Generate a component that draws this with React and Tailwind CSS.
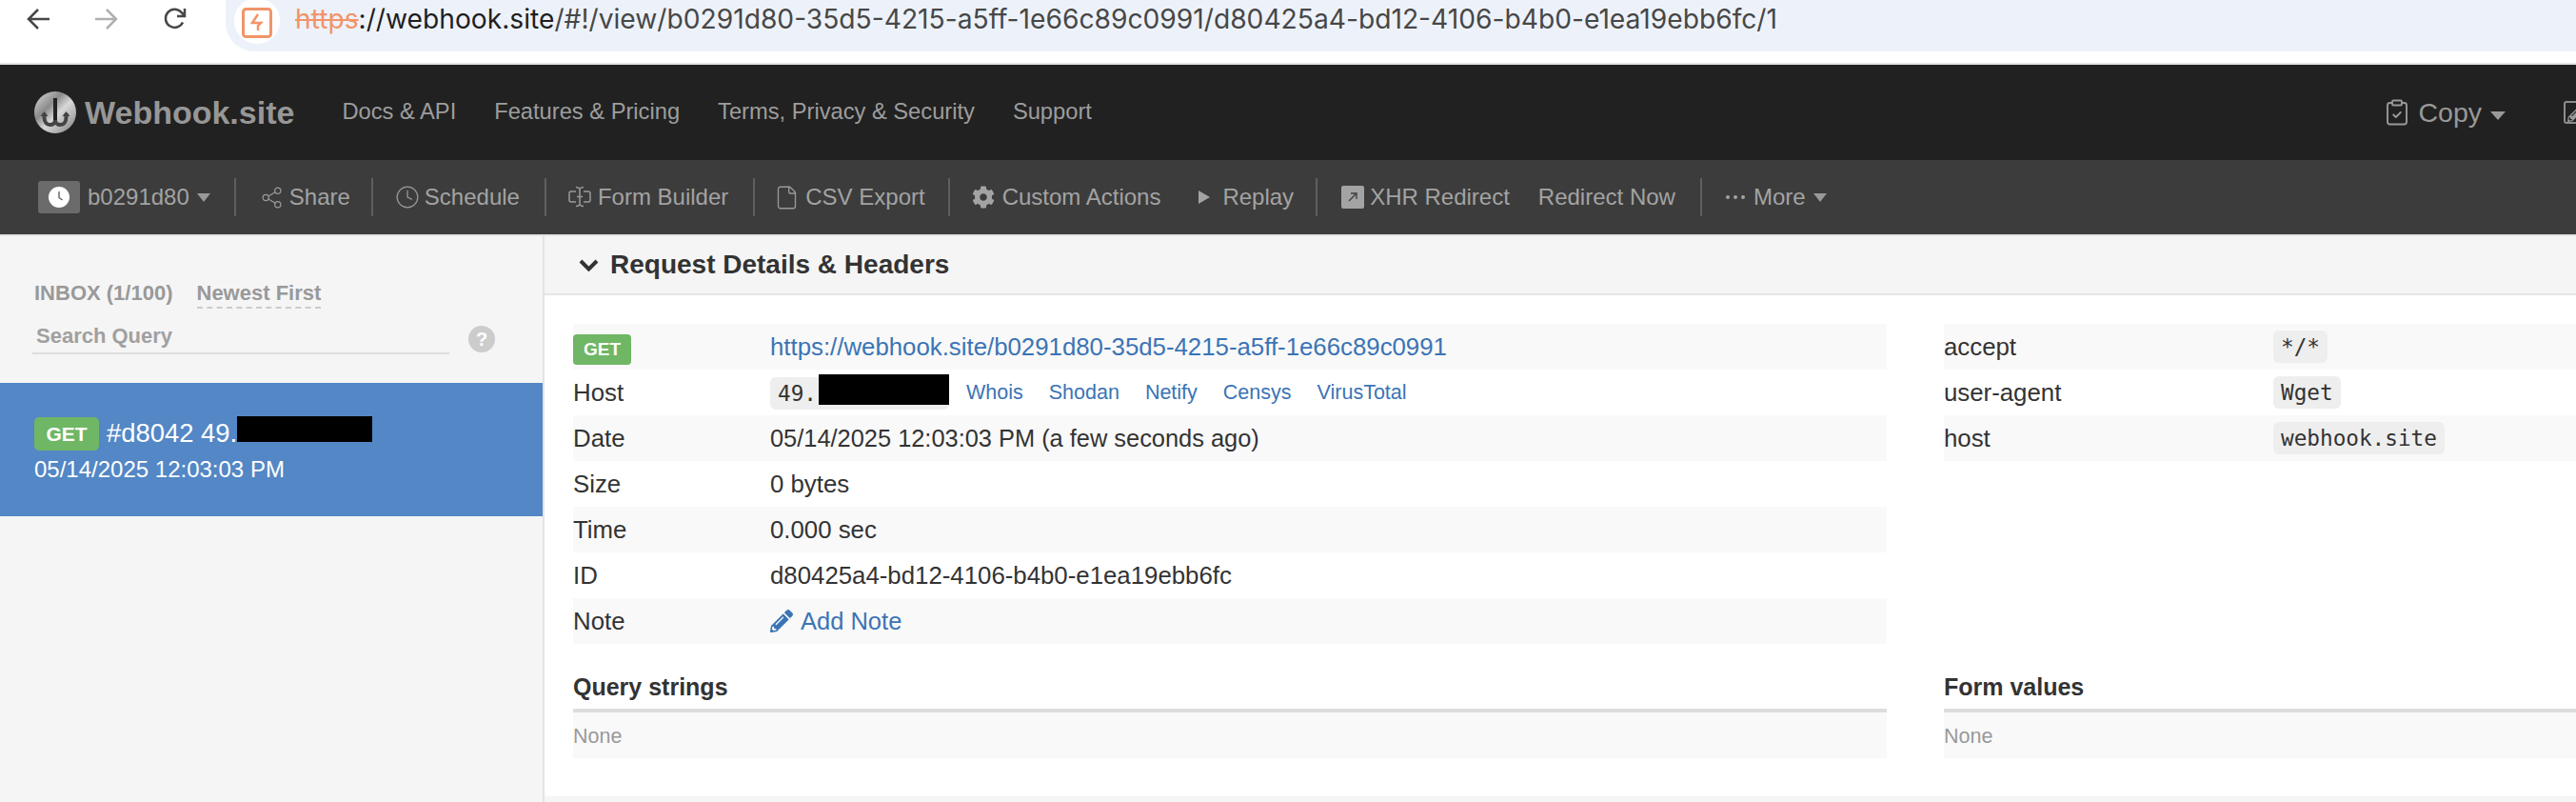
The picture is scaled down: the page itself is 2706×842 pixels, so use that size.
import React from 'react';
import { Share2, Clock, File, ClipboardCheck } from 'lucide-react';
import { FaCog, FaPencilAlt } from 'react-icons/fa';

const sans = "font-['Liberation_Sans',Arial,sans-serif]";

function Caret({ className = 'border-t-[9px] border-x-[7px]' }) {
  return <span className={`inline-block w-0 h-0 border-solid border-x-transparent border-t-[#999] border-b-0 ${className}`} />;
}

function Divider() {
  return <span className="w-[2px] h-10 bg-[#5f5f5f] shrink-0" />;
}

function Logo() {
  return (
    <svg width="44" height="44" viewBox="0 0 44 44">
      <defs>
        <linearGradient id="metal" x1="0" y1="0" x2="1" y2="1">
          <stop offset="0" stopColor="#e0e0e0" />
          <stop offset="0.35" stopColor="#8a8a8a" />
          <stop offset="0.55" stopColor="#d8d8d8" />
          <stop offset="0.75" stopColor="#b0b0b0" />
          <stop offset="1" stopColor="#777" />
        </linearGradient>
      </defs>
      <circle cx="22" cy="22" r="22" fill="url(#metal)" />
      <path d="M22 7v23" stroke="#222" strokeWidth="4" fill="none" />
      <path d="M10.500 23v4c0 6 3 8 6 8s5.500-2 5.500-5c0 3 2.500 5 5.500 5s6-2 6-8v-4" stroke="#444" strokeWidth="4" fill="none" />
      <path d="M6.500 26l4-5 4 5zM29.500 26l4-5 4 5z" fill="#444" />
    </svg>
  );
}

function SecurityIcon() {
  return (
    <svg width="32" height="32" viewBox="0 0 32 32" fill="none" stroke="#f29468">
      <rect x="1.500" y="1.500" width="29" height="29" rx="3" strokeWidth="3" />
      <path d="M17 7l-6 9h9l-3 3v5" strokeWidth="2.500" />
    </svg>
  );
}

function FormIcon() {
  return (
    <svg width="24" height="24" viewBox="0 0 24 24" fill="none" stroke="#999" strokeWidth="1.500">
      <path d="M8 6H3a2 2 0 0 0-2 2v7a2 2 0 0 0 2 2h5M16 6h5a2 2 0 0 1 2 2v7a2 2 0 0 1-2 2h-5" />
      <path d="M8 1.500c2 0 3 .8 4 1.500 1-.7 2-1.500 4-1.500M8 21.500c2 0 3-.8 4-1.500 1 .7 2 1.500 4 1.500M12 3v17M9 11.500h6" />
    </svg>
  );
}

function Chrome() {
  return (
    <div className="h-[66px] bg-white flex items-start shrink-0 overflow-hidden">
      <div className="flex items-center pl-7 pt-[8px] gap-[48px] w-[237px] shrink-0">
        <svg width="24" height="24" viewBox="0 0 24 24" fill="none" stroke="#474747" strokeWidth="2.500"><path d="M24 12H2M12 2L2 12l10 10" /></svg>
        <svg width="24" height="24" viewBox="0 0 24 24" fill="none" stroke="#b0b0b0" strokeWidth="2.500"><path d="M0 12h22M12 2l10 10-10 10" /></svg>
        <svg width="24" height="24" viewBox="0 0 24 24" fill="none" stroke="#474747" strokeWidth="2.500"><path d="M20 15.500A9.500 9.500 0 1 1 18.500 5L22 8.500M22 1v8h-8" /></svg>
      </div>
      <div className="flex-1 h-[54px] bg-[#edf2fa] rounded-bl-[30px] flex items-center pl-[9px]">
        <span className="w-[48px] h-[48px] -mt-[10px] rounded-full bg-white flex items-center justify-center shrink-0 pt-[3px]">
          <SecurityIcon />
        </span>
        <span className="ml-[16px] -mt-[14px] font-['Inter',sans-serif] text-[28.200px] text-[#474747] whitespace-nowrap">
          <span className="text-[#f29468] line-through">https</span>
          <span className="text-[#1f1f1f]">://webhook.site</span>
          /#!/view/b0291d80-35d5-4215-a5ff-1e66c89c0991/d80425a4-bd12-4106-b4b0-e1ea19ebb6fc/1
        </span>
      </div>
    </div>
  );
}

function Navbar() {
  return (
    <div className="h-[100px] bg-[#212121] flex items-center pl-9 text-[#9d9d9d] text-[23.700px] shrink-0 relative">
      <Logo />
      <span className="ml-[9px] mr-[50px] text-[34px] font-bold text-[#979797]">Webhook.site</span>
      <div className="flex items-center gap-[40px]">
        <span>Docs &amp; API</span>
        <span>Features &amp; Pricing</span>
        <span>Terms, Privacy &amp; Security</span>
        <span>Support</span>
      </div>
      <div className="ml-auto flex items-center">
        <ClipboardCheck size={30} strokeWidth={1.500} color="#999" />
        <span className="ml-[7px] text-[28.500px] text-[#999]">Copy</span>
        <span className="ml-[9px] mt-[6px] flex"><Caret className="border-t-[9px] border-x-[8px]" /></span>
        <span className="ml-[61px] w-[24px] h-[24px] border-2 border-[#8c8c8c] rounded-[3px] overflow-hidden flex items-end -mr-[11px] shrink-0">
          <FaPencilAlt size={18} color="#999" className="ml-[2px]" />
        </span>
      </div>
    </div>
  );
}

function Toolbar() {
  return (
    <div className="h-[78px] bg-[#3c3c3c] flex items-center pl-10 text-[#a3a3a3] text-[24px] whitespace-nowrap shrink-0">
      <div className="flex items-center">
        <span className="w-[44px] h-[34px] rounded-[3px] bg-[#6b6b6b] flex items-center justify-center">
          <svg width="22" height="22" viewBox="0 0 22 22"><circle cx="11" cy="11" r="11" fill="#fff" /><path d="M11 5v6.500l3.500 2.500" stroke="#555" strokeWidth="1.300" fill="none" /></svg>
        </span>
        <span className="ml-2">b0291d80</span>
        <span className="ml-2 flex"><Caret /></span>
      </div>
      <span className="w-[25px]" />
      <Divider />
      <div className="flex items-center gap-[6px] ml-[25px] mr-[22px]"><Share2 size={25} strokeWidth={1.200} color="#999" /><span>Share</span></div>
      <Divider />
      <div className="flex items-center gap-[5px] ml-[23px] mr-[26px]"><Clock size={26} strokeWidth={1.200} color="#999" /><span>Schedule</span></div>
      <Divider />
      <div className="flex items-center gap-[7px] ml-[23px] mr-[26px]"><FormIcon /><span>Form Builder</span></div>
      <Divider />
      <div className="flex items-center gap-[6px] ml-[20px] mr-[24px]"><File size={27} strokeWidth={1.200} color="#999" /><span>CSV Export</span></div>
      <Divider />
      <div className="flex items-center gap-[8px] ml-[23px]"><FaCog size={24} color="#a3a3a3" /><span>Custom Actions</span></div>
      <div className="flex items-center gap-[13px] ml-[40px] mr-[23px]">
        <span className="w-0 h-0 border-solid border-y-[7px] border-y-transparent border-l-[12px] border-l-[#a3a3a3]" />
        <span>Replay</span>
      </div>
      <Divider />
      <div className="flex items-center gap-[6px] ml-[25px]">
        <span className="w-[24px] h-[24px] bg-[#a3a3a3] rounded-[2px] flex items-center justify-center">
          <svg width="12" height="12" viewBox="0 0 12 12" fill="none" stroke="#3c3c3c" strokeWidth="1.300"><path d="M2 10l8-8M4 2h6v6" /></svg>
        </span>
        <span>XHR Redirect</span>
      </div>
      <span className="ml-[30px] mr-[26px]">Redirect Now</span>
      <Divider />
      <div className="flex items-center ml-[25px]">
        <span className="flex gap-[4px]">
          <span className="w-[4px] h-[4px] rounded-full bg-[#a3a3a3]" />
          <span className="w-[4px] h-[4px] rounded-full bg-[#a3a3a3]" />
          <span className="w-[4px] h-[4px] rounded-full bg-[#a3a3a3]" />
        </span>
        <span className="ml-[9px]">More</span>
        <span className="ml-2 flex"><Caret /></span>
      </div>
    </div>
  );
}

function Sidebar() {
  return (
    <aside className="w-[572px] shrink-0 bg-[#f5f5f5] border-r-2 border-[#e3e3e3]">
      <div className="h-[154px] pl-9 pt-[47px] relative">
        <div className="flex text-[22px] font-bold text-[#999] leading-[26px] gap-[25px]">
          <span>INBOX (1/100)</span>
          <span className="border-b-2 border-dashed border-[#ccc] pb-[3px] h-[29px]">Newest First</span>
        </div>
        <div className="flex items-start mt-[12px] -ml-[2px]">
          <div className="w-[438px] h-[36px] border-b-2 border-[#ddd] pl-1 pt-[4px] text-[22px] font-bold text-[#a0a0a0] leading-[26px]">Search Query</div>
          <span className="ml-[20px] mt-[6px] w-[28px] h-[28px] rounded-full bg-[#ccc] text-white font-bold text-[20px] flex items-center justify-center">?</span>
        </div>
      </div>
      <div className="h-[140px] bg-[#5387c5] pl-9 pt-[35px] text-white">
        <div className="flex items-start h-[36px]">
          <span className="w-[68px] h-[35px] rounded-[5px] bg-[#6fb665] text-[21px] font-bold flex items-center justify-center mt-[1px]">GET</span>
          <span className="ml-2 text-[27.400px] leading-[36px]">#d8042 49.</span>
          <span className="w-[142px] h-[27px] bg-black" />
        </div>
        <div className="text-[24px] leading-[28px] mt-[6px]">05/14/2025 12:03:03 PM</div>
      </div>
    </aside>
  );
}

function Row({ striped, label, children }) {
  return (
    <div className={`h-[48px] flex items-center text-[25.800px] text-[#333] ${striped ? 'bg-[#f9f9f9]' : ''}`}>
      <div className="w-[207px] shrink-0">{label}</div>
      {children}
    </div>
  );
}

function Code({ children }) {
  return <code className="h-[34px] inline-flex items-center px-2 rounded-[6px] bg-[#eee] font-['DejaVu_Sans_Mono',monospace] text-[22.700px] text-[#333]">{children}</code>;
}

function HeaderRow({ striped, label, value }) {
  return (
    <div className={`h-[48px] flex items-center text-[25.800px] text-[#333] ${striped ? 'bg-[#f9f9f9]' : ''}`}>
      <div className="w-[346px] shrink-0">{label}</div>
      <Code>{value}</Code>
    </div>
  );
}

function Section({ title }) {
  return (
    <div>
      <div className="h-[46px] mt-[22px] text-[25px] font-bold text-[#333] leading-[46px] border-b-4 border-[#ddd] box-content">{title}</div>
      <div className="h-[48px] bg-[#f9f9f9] flex items-center pt-[3px] text-[21.500px] text-[#999]">None</div>
    </div>
  );
}

function Details() {
  const links = ['Whois', 'Shodan', 'Netify', 'Censys', 'VirusTotal'];
  return (
    <main className="flex-1 min-w-0 bg-white flex flex-col h-full">
      <div className="h-[62px] bg-[#f5f5f5] border-b-2 border-[#e6e6e6] flex items-center pl-9 shrink-0">
        <svg width="21" height="13" viewBox="0 0 21 13" fill="none" stroke="#333" strokeWidth="4"><path d="M2 2l8.500 8.500L19 2" /></svg>
        <span className="ml-3 text-[28px] font-bold text-[#333]">Request Details &amp; Headers</span>
      </div>
      <div className="grid grid-cols-[1380px_1fr] gap-x-[60px] pl-[30px] pt-[30px] h-[526px] shrink-0">
        <div>
          <Row striped label={<span className="inline-flex w-[61px] h-[32px] rounded-[4px] bg-[#6fb665] text-white text-[19px] font-bold items-center justify-center">GET</span>}>
            <span className="text-[#3b74b5]">https://webhook.site/b0291d80-35d5-4215-a5ff-1e66c89c0991</span>
          </Row>
          <Row label="Host">
            <span className="relative">
              <Code><span className="inline-block w-[172px]">49.</span></Code>
              <span className="absolute left-[51px] top-0 w-[137px] h-[32px] bg-black" />
            </span>
            <span className="flex gap-[27px] ml-[18px] text-[21.500px] text-[#3b74b5]">
              {links.map((l) => <span key={l}>{l}</span>)}
            </span>
          </Row>
          <Row striped label="Date"><span className="text-[25.400px]">05/14/2025 12:03:03 PM (a few seconds ago)</span></Row>
          <Row label="Size">0 bytes</Row>
          <Row striped label="Time">0.000 sec</Row>
          <Row label="ID">d80425a4-bd12-4106-b4b0-e1ea19ebb6fc</Row>
          <Row striped label="Note">
            <span className="flex items-center gap-[8px] text-[#3b74b5] text-[25.500px]"><FaPencilAlt size={24} /><span>Add Note</span></span>
          </Row>
          <Section title="Query strings" />
        </div>
        <div>
          <HeaderRow striped label="accept" value="*/*" />
          <HeaderRow label="user-agent" value="Wget" />
          <HeaderRow striped label="host" value="webhook.site" />
          <div className="h-[192px]" />
          <Section title="Form values" />
        </div>
      </div>
      <div className="flex-1 bg-[#f5f5f5]" />
    </main>
  );
}

export default function App() {
  return (
    <div className={`w-full h-[842px] overflow-hidden flex flex-col ${sans}`}>
      <Chrome />
      <div className="h-[2px] bg-[#e5e5e5] shrink-0" />
      <Navbar />
      <Toolbar />
      <div className="h-[2px] bg-[#e3e3e3] shrink-0" />
      <div className="flex flex-1 min-h-0">
        <Sidebar />
        <Details />
      </div>
    </div>
  );
}
